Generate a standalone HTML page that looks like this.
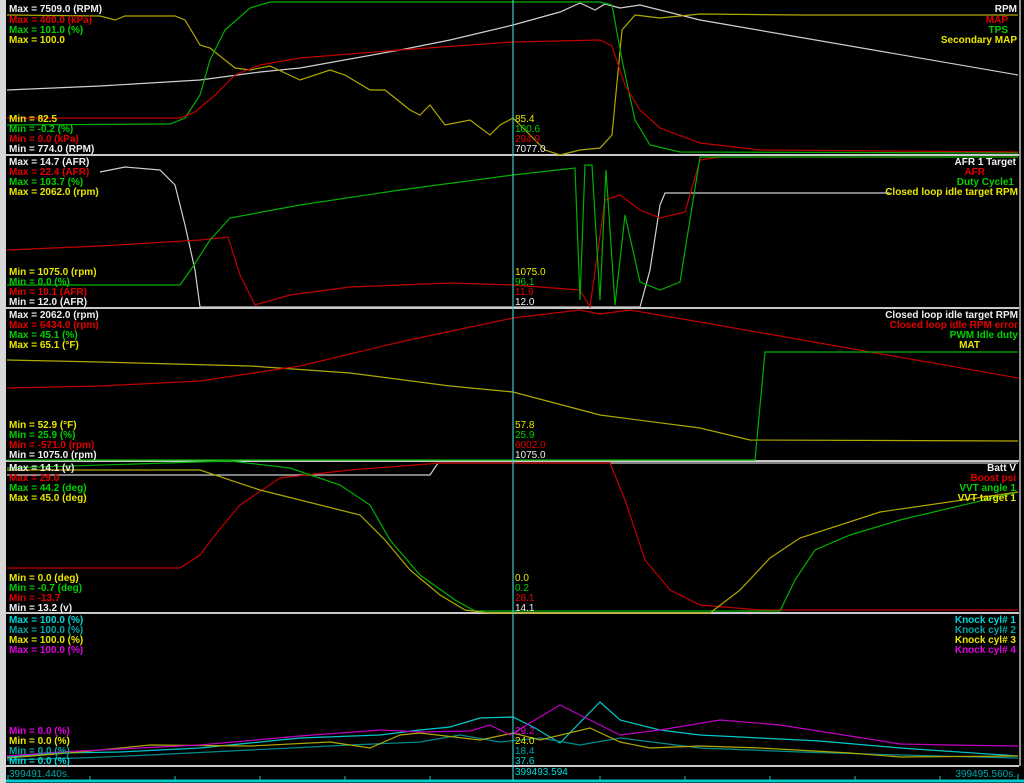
<!DOCTYPE html>
<html><head><meta charset="utf-8"><style>
html,body{margin:0;padding:0;background:#000;width:1024px;height:783px;overflow:hidden}
svg{display:block}
text{font-family:"Liberation Sans",sans-serif;font-size:10px;font-weight:bold}
.w{fill:#f0f0f0}.r{fill:#e00000}.g{fill:#00d000}.y{fill:#e8e800}.c{fill:#00d8d8}.t{fill:#00a8a8}.m{fill:#e000e0}
.v{font-weight:normal}
polyline{fill:none;stroke-width:1.2}
</style></head><body>
<svg width="1024" height="783" viewBox="0 0 1024 783">
<rect width="1024" height="783" fill="#000"/>
<rect x="0" y="0" width="6" height="783" fill="#d8d8d8"/>
<rect x="1019" y="0" width="2" height="766" fill="#909090"/>
<g stroke="#c8c8c8" stroke-width="2">
<line x1="6" y1="155" x2="1019" y2="155"/><line x1="6" y1="308" x2="1019" y2="308"/>
<line x1="6" y1="461" x2="1019" y2="461"/><line x1="6" y1="613" x2="1019" y2="613"/>
<line x1="6" y1="766" x2="1019" y2="766"/></g>
<line x1="6" y1="781" x2="1024" y2="781" stroke="#00c8c8" stroke-width="3"/>
<g stroke="#00c8c8"><line x1="8" y1="775" x2="8" y2="781"/><line x1="90" y1="776" x2="90" y2="781"/><line x1="175" y1="776" x2="175" y2="781"/><line x1="260" y1="776" x2="260" y2="781"/><line x1="345" y1="776" x2="345" y2="781"/><line x1="430" y1="776" x2="430" y2="781"/><line x1="600" y1="776" x2="600" y2="781"/><line x1="685" y1="776" x2="685" y2="781"/><line x1="770" y1="776" x2="770" y2="781"/><line x1="855" y1="776" x2="855" y2="781"/><line x1="940" y1="776" x2="940" y2="781"/><line x1="1018" y1="774" x2="1018" y2="781"/></g>

<polyline stroke="#d0d0d0" points="7,90 100,86 200,80 260,72 300,68 400,50 450,40 513,25 560,12 580,3 595,10 605,4 620,8 640,5 700,20 1018,75"/>
<polyline stroke="#b0a800" points="7,15 100,16 115,20 125,16 175,16 185,20 200,45 210,48 235,68 250,70 270,66 300,80 330,70 345,75 370,90 385,90 400,102 410,110 420,115 430,105 445,125 470,120 490,135 500,125 513,118 530,135 545,150 560,155 580,150 600,148 612,135 622,30 635,15 660,18 700,14 800,15 1018,15"/>
<polyline stroke="#00b000" points="7,125 170,124 185,118 200,95 210,60 225,30 250,8 270,2 600,2 612,5 622,60 635,120 650,145 680,152 1018,153"/>
<polyline stroke="#c00000" points="7,118 180,118 195,112 215,95 235,75 260,65 300,58 400,50 513,42 600,40 612,46 625,85 640,110 660,128 700,143 760,150 1018,152"/>

<polyline stroke="#d0d0d0" points="100,172 125,167 160,170 175,185 185,225 195,270 200,307 640,307 650,270 660,205 665,193 890,193"/>
<polyline stroke="#c00000" points="7,250 100,246 200,240 228,237 240,275 255,305 290,295 350,287 450,283 513,285 580,290 590,307 605,200 620,195 640,210 660,218 685,212 700,160 720,157 1018,157"/>
<polyline stroke="#00b000" points="7,285 180,285 192,268 210,240 230,218 300,205 400,190 513,175 575,168 580,300 585,165 592,165 600,300 606,170 615,305 625,215 640,282 660,290 680,282 700,157 1018,157"/>

<polyline stroke="#b0a800" points="7,360 100,362 250,366 350,373 450,386 513,392 600,415 700,428 750,440 1018,441"/>
<polyline stroke="#c00000" points="7,388 100,386 200,381 300,366 400,342 513,318 580,310 600,314 630,310 700,322 1018,378"/>
<polyline stroke="#00b000" points="7,460 755,460 765,352 1018,352"/>

<polyline stroke="#d0d0d0" points="7,475 430,475 438,463 1018,463"/>
<polyline stroke="#c00000" points="7,568 180,568 200,555 215,535 240,505 280,478 350,470 440,463 610,463 625,500 645,560 670,590 700,605 760,610 1018,610"/>
<polyline stroke="#00b000" points="7,468 230,461 290,468 340,485 370,505 390,540 420,575 455,600 475,611 780,611 795,580 815,550 850,535 900,520 1018,492"/>
<polyline stroke="#b0a800" points="7,470 200,470 260,490 360,515 385,540 410,570 440,595 465,610 490,613 710,613 740,590 770,558 800,538 880,512 1018,492"/>

<polyline stroke="#00c8c8" points="7,757 60,753 120,752 200,748 300,738 380,735 420,730 450,727 480,718 513,717 535,728 560,743 600,702 620,720 660,730 700,735 760,738 820,741 900,748 1018,756"/>
<polyline stroke="#008c8c" points="7,760 80,758 150,755 250,750 350,745 420,742 460,735 500,742 540,738 580,745 620,738 700,748 800,752 900,755 1018,758"/>
<polyline stroke="#b0a800" points="7,758 80,752 150,745 250,746 330,742 370,748 400,735 420,733 480,740 513,733 540,740 590,728 620,742 650,748 700,746 760,748 850,753 900,757 1018,756"/>
<polyline stroke="#c000c0" points="7,756 60,752 120,749 200,745 300,736 380,730 420,732 470,731 490,725 510,735 560,705 620,735 660,730 720,720 780,725 850,736 900,744 950,745 1018,746"/>

<line x1="513" y1="0" x2="513" y2="781" stroke="#40c8c8" stroke-width="1.2"/>

<text x="9" y="12" class="w">Max = 7509.0 (RPM)</text>
<text x="9" y="23" class="r">Max = 400.0 (kPa)</text>
<text x="9" y="33" class="g">Max = 101.0 (%)</text>
<text x="9" y="43" class="y">Max = 100.0</text>
<text x="9" y="122" class="y">Min = 82.5</text>
<text x="9" y="132" class="g">Min = -0.2 (%)</text>
<text x="9" y="142" class="r">Min = 0.0 (kPa)</text>
<text x="9" y="152" class="w">Min = 774.0 (RPM)</text>
<g text-anchor="end"><text x="1017" y="12" class="w">RPM</text><text x="1008" y="23" class="r">MAP</text><text x="1008" y="33" class="g">TPS</text><text x="1017" y="43" class="y">Secondary MAP</text></g>
<text x="515" y="122" class="y v">85.4</text><text x="515" y="132" class="g v">100.6</text><text x="515" y="142" class="r v">294.9</text><text x="515" y="152" class="w v">7077.0</text>

<text x="9" y="165" class="w">Max = 14.7 (AFR)</text>
<text x="9" y="175" class="r">Max = 22.4 (AFR)</text>
<text x="9" y="185" class="g">Max = 103.7 (%)</text>
<text x="9" y="195" class="y">Max = 2062.0 (rpm)</text>
<text x="9" y="275" class="y">Min = 1075.0 (rpm)</text>
<text x="9" y="285" class="g">Min = 0.0 (%)</text>
<text x="9" y="295" class="r">Min = 10.1 (AFR)</text>
<text x="9" y="305" class="w">Min = 12.0 (AFR)</text>
<g text-anchor="end"><text x="1016" y="165" class="w">AFR 1 Target</text><text x="985" y="175" class="r">AFR</text><text x="1014" y="185" class="g">Duty Cycle1</text><text x="1018" y="195" class="y">Closed loop idle target RPM</text></g>
<text x="515" y="275" class="y v">1075.0</text><text x="515" y="285" class="g v">96.1</text><text x="515" y="295" class="r v">11.9</text><text x="515" y="305" class="w v">12.0</text>

<text x="9" y="318" class="w">Max = 2062.0 (rpm)</text>
<text x="9" y="328" class="r">Max = 6434.0 (rpm)</text>
<text x="9" y="338" class="g">Max = 45.1 (%)</text>
<text x="9" y="348" class="y">Max = 65.1 (°F)</text>
<text x="9" y="428" class="y">Min = 52.9 (°F)</text>
<text x="9" y="438" class="g">Min = 25.9 (%)</text>
<text x="9" y="448" class="r">Min = -571.0 (rpm)</text>
<text x="9" y="458" class="w">Min = 1075.0 (rpm)</text>
<g text-anchor="end"><text x="1018" y="318" class="w">Closed loop idle target RPM</text><text x="1018" y="328" class="r">Closed loop idle RPM error</text><text x="1018" y="338" class="g">PWM Idle duty</text><text x="980" y="348" class="y">MAT</text></g>
<text x="515" y="428" class="y v">57.8</text><text x="515" y="438" class="g v">25.9</text><text x="515" y="448" class="r v">6002.0</text><text x="515" y="458" class="w v">1075.0</text>

<text x="9" y="471" class="w">Max = 14.1 (v)</text>
<text x="9" y="481" class="r">Max = 29.0</text>
<text x="9" y="491" class="g">Max = 44.2 (deg)</text>
<text x="9" y="501" class="y">Max = 45.0 (deg)</text>
<text x="9" y="581" class="y">Min = 0.0 (deg)</text>
<text x="9" y="591" class="g">Min = -0.7 (deg)</text>
<text x="9" y="601" class="r">Min = -13.7</text>
<text x="9" y="611" class="w">Min = 13.2 (v)</text>
<g text-anchor="end"><text x="1016" y="471" class="w">Batt V</text><text x="1016" y="481" class="r">Boost psi</text><text x="1016" y="491" class="g">VVT angle 1</text><text x="1016" y="501" class="y">VVT target 1</text></g>
<text x="515" y="581" class="y v">0.0</text><text x="515" y="591" class="g v">0.2</text><text x="515" y="601" class="r v">28.1</text><text x="515" y="611" class="w v">14.1</text>

<text x="9" y="623" class="c">Max = 100.0 (%)</text>
<text x="9" y="633" class="t">Max = 100.0 (%)</text>
<text x="9" y="643" class="y">Max = 100.0 (%)</text>
<text x="9" y="653" class="m">Max = 100.0 (%)</text>
<text x="9" y="734" class="m">Min = 0.0 (%)</text>
<text x="9" y="744" class="y">Min = 0.0 (%)</text>
<text x="9" y="754" class="t">Min = 0.0 (%)</text>
<text x="9" y="764" class="c">Min = 0.0 (%)</text>
<g text-anchor="end"><text x="1016" y="623" class="c">Knock cyl# 1</text><text x="1016" y="633" class="t">Knock cyl# 2</text><text x="1016" y="643" class="y">Knock cyl# 3</text><text x="1016" y="653" class="m">Knock cyl# 4</text></g>
<text x="515" y="734" class="m v">29.2</text><text x="515" y="744" class="y v">24.0</text><text x="515" y="754" class="t v">18.4</text><text x="515" y="764" class="c v">37.6</text>

<text x="9" y="777" class="t v">399491.440s.</text>
<text x="515" y="775" class="c v">399493.594</text>
<text x="1016" y="777" class="t v" text-anchor="end">399495.560s.</text>
</svg>
</body></html>
